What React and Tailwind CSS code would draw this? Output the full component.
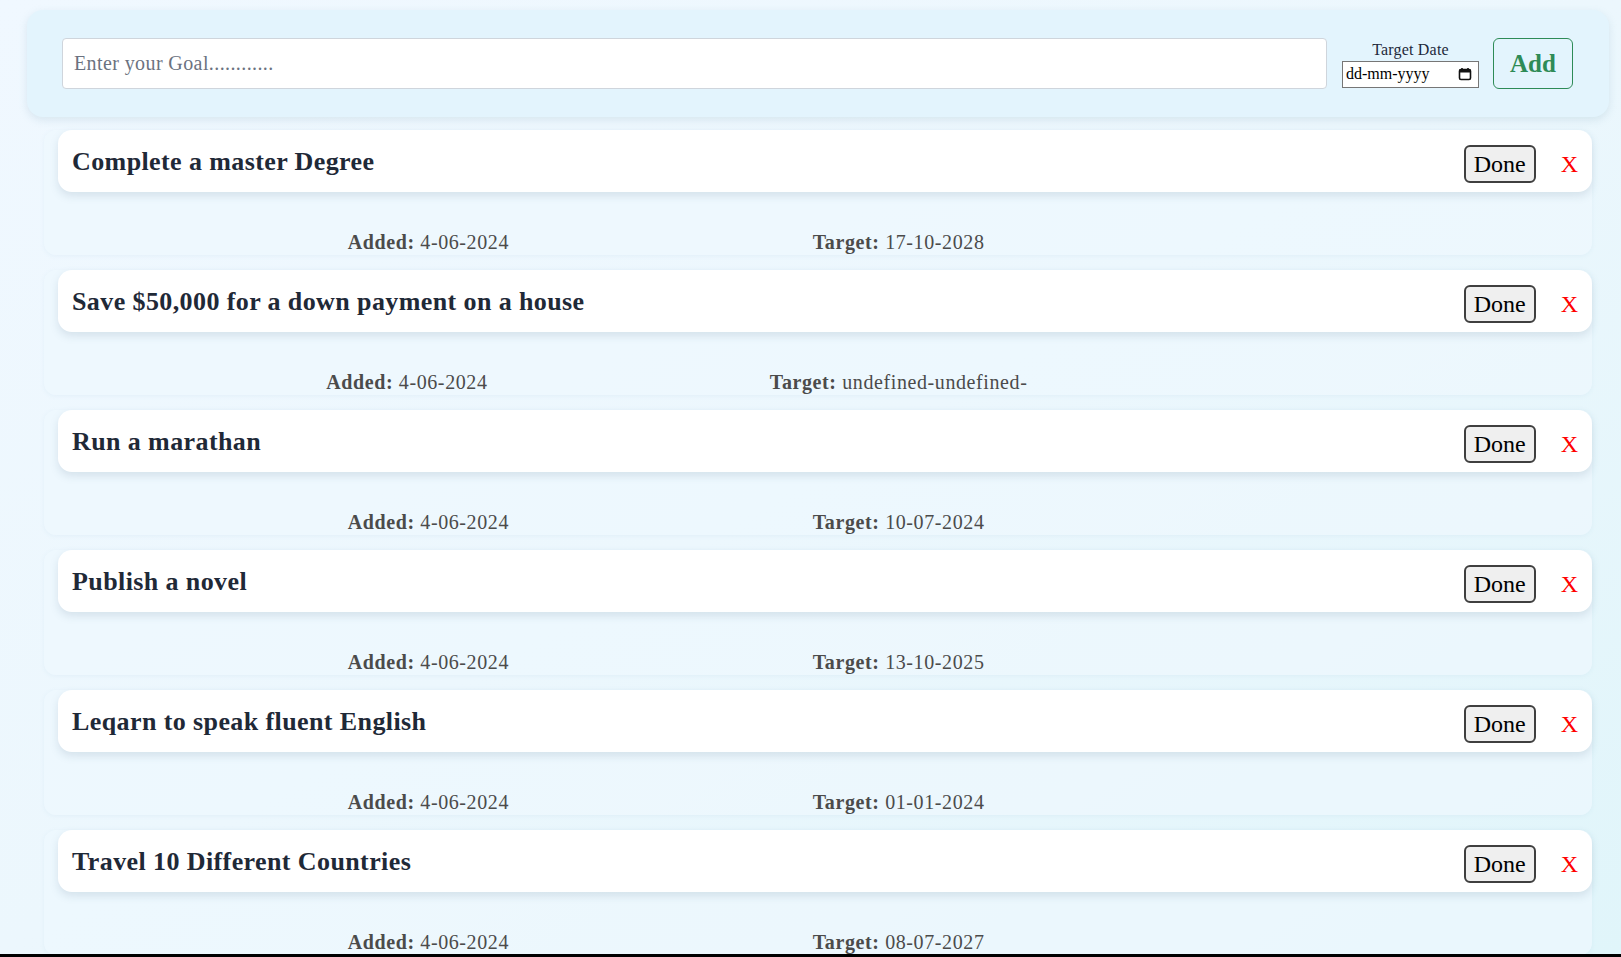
import React, { useState } from 'react';

const serif = { fontFamily: 'Georgia, "Liberation Serif", "DejaVu Serif", serif' };

const initialGoals = [
  { id: 1, text: 'Complete a master Degree', added: '4-06-2024', target: '17-10-2028' },
  { id: 2, text: 'Save $50,000 for a down payment on a house', added: '4-06-2024', target: 'undefined-undefined-' },
  { id: 3, text: 'Run a marathan', added: '4-06-2024', target: '10-07-2024' },
  { id: 4, text: 'Publish a novel', added: '4-06-2024', target: '13-10-2025' },
  { id: 5, text: 'Leqarn to speak fluent English', added: '4-06-2024', target: '01-01-2024' },
  { id: 6, text: 'Travel 10 Different Countries', added: '4-06-2024', target: '08-07-2027' },
];

const CalendarIcon = () => (
  <svg width="14" height="14" viewBox="0 0 14 14" fill="none">
    <rect x="1.5" y="2.5" width="11" height="10" rx="1.5" stroke="#111" strokeWidth="1.6" />
    <rect x="1.5" y="2.5" width="11" height="3" fill="#111" />
    <line x1="4" y1="1" x2="4" y2="3" stroke="#111" strokeWidth="1.6" />
    <line x1="10" y1="1" x2="10" y2="3" stroke="#111" strokeWidth="1.6" />
  </svg>
);

const GoalItem = ({ goal, onRemove }) => (
  <div className="flex flex-col rounded-xl bg-[#eef8fd]/70 shadow-[0_1px_4px_rgba(150,190,210,0.12)]">
    {/* goal card */}
    <div className="ml-[14px] flex h-[62px] items-center justify-between rounded-[14px] bg-white pl-[14px] pr-[3px] shadow-[0_4px_8px_rgba(100,130,150,0.18)]">
      <h2 className="text-[26px] font-bold tracking-[0.4px] text-[#1f2937]" style={serif}>
        {goal.text}
      </h2>
      <div className="flex items-center gap-[14px] pt-[5px]">
        <button
          className="h-[38px] w-[72px] rounded-[6px] border-2 border-[#3f3f3f] bg-[#efefef] text-[24px] leading-none text-black"
          style={{ fontFamily: '"Liberation Serif", serif' }}
        >
          Done
        </button>
        <button
          onClick={() => onRemove(goal.id)}
          className="px-[11px] text-[24px] leading-none text-[#ff0000]"
          style={{ fontFamily: '"Liberation Serif", serif' }}
        >
          X
        </button>
      </div>
    </div>

    {/* dates row */}
    <div className="mt-[36px] flex h-[27px] items-center justify-evenly text-[20px] tracking-[0.6px] text-[#4b4b4b]" style={serif}>
      <p>
        <span className="font-bold">Added:</span> {goal.added}
      </p>
      <p>
        <span className="font-bold">Target:</span> {goal.target}
      </p>
      <span></span>
    </div>
  </div>
);

const App = () => {
  const [goals, setGoals] = useState(initialGoals);
  const [input, setInput] = useState('');

  const handleAdd = () => {
    if (!input.trim()) return;
    setGoals((prev) => [...prev, { id: Date.now(), text: input, added: '4-06-2024', target: 'undefined-undefined-' }]);
    setInput('');
  };

  return (
    <div className="h-[957px] overflow-hidden bg-gradient-to-br from-[#f0f8ff] via-[#ecf7fd] to-[#e0f5fa]">
      <div className="pl-[27px] pr-[12px] pt-[10px]">
        {/* Input panel */}
        <div className="flex h-[107px] items-center rounded-2xl bg-[#e3f4fd] pl-[35px] pr-[36px] shadow-[0_3px_8px_rgba(120,160,180,0.2)]">
          <input
            value={input}
            onChange={(e) => setInput(e.target.value)}
            placeholder="Enter your Goal............"
            className="h-[51px] flex-1 rounded-[4px] border border-[#cfd5dc] bg-white px-[11px] text-[20px] tracking-[0.4px] text-[#111] outline-none placeholder:text-[#6b7280]"
            style={serif}
          />
          <div className="ml-[15px] flex flex-col items-center">
            <label className="text-[16px] leading-[20px] tracking-[0.2px] text-[#1e293b]" style={serif}>
              Target Date
            </label>
            <div className="mt-[1px] flex h-[27px] w-[137px] items-center justify-between border border-[#767676] bg-white pl-[3px] pr-[6px] text-[16px] text-black" style={{ fontFamily: '"Liberation Serif", serif' }}>
              <span>dd-mm-yyyy</span>
              <CalendarIcon />
            </div>
          </div>
          <button
            onClick={handleAdd}
            className="ml-[14px] h-[51px] w-[80px] rounded-[6px] border border-[#2e8b57] text-[25px] font-bold text-[#2e8b57]"
            style={serif}
          >
            Add
          </button>
        </div>

        {/* Goal list */}
        <div className="mt-[13px] flex flex-col gap-[15px] pl-[17px] pr-[17px]">
          {goals.map((goal) => (
            <GoalItem key={goal.id} goal={goal} onRemove={(id) => setGoals((prev) => prev.filter((g) => g.id !== id))} />
          ))}
        </div>
      </div>
      <div className="fixed bottom-0 left-0 h-[3px] w-full bg-black"></div>
    </div>
  );
};

export default App;
